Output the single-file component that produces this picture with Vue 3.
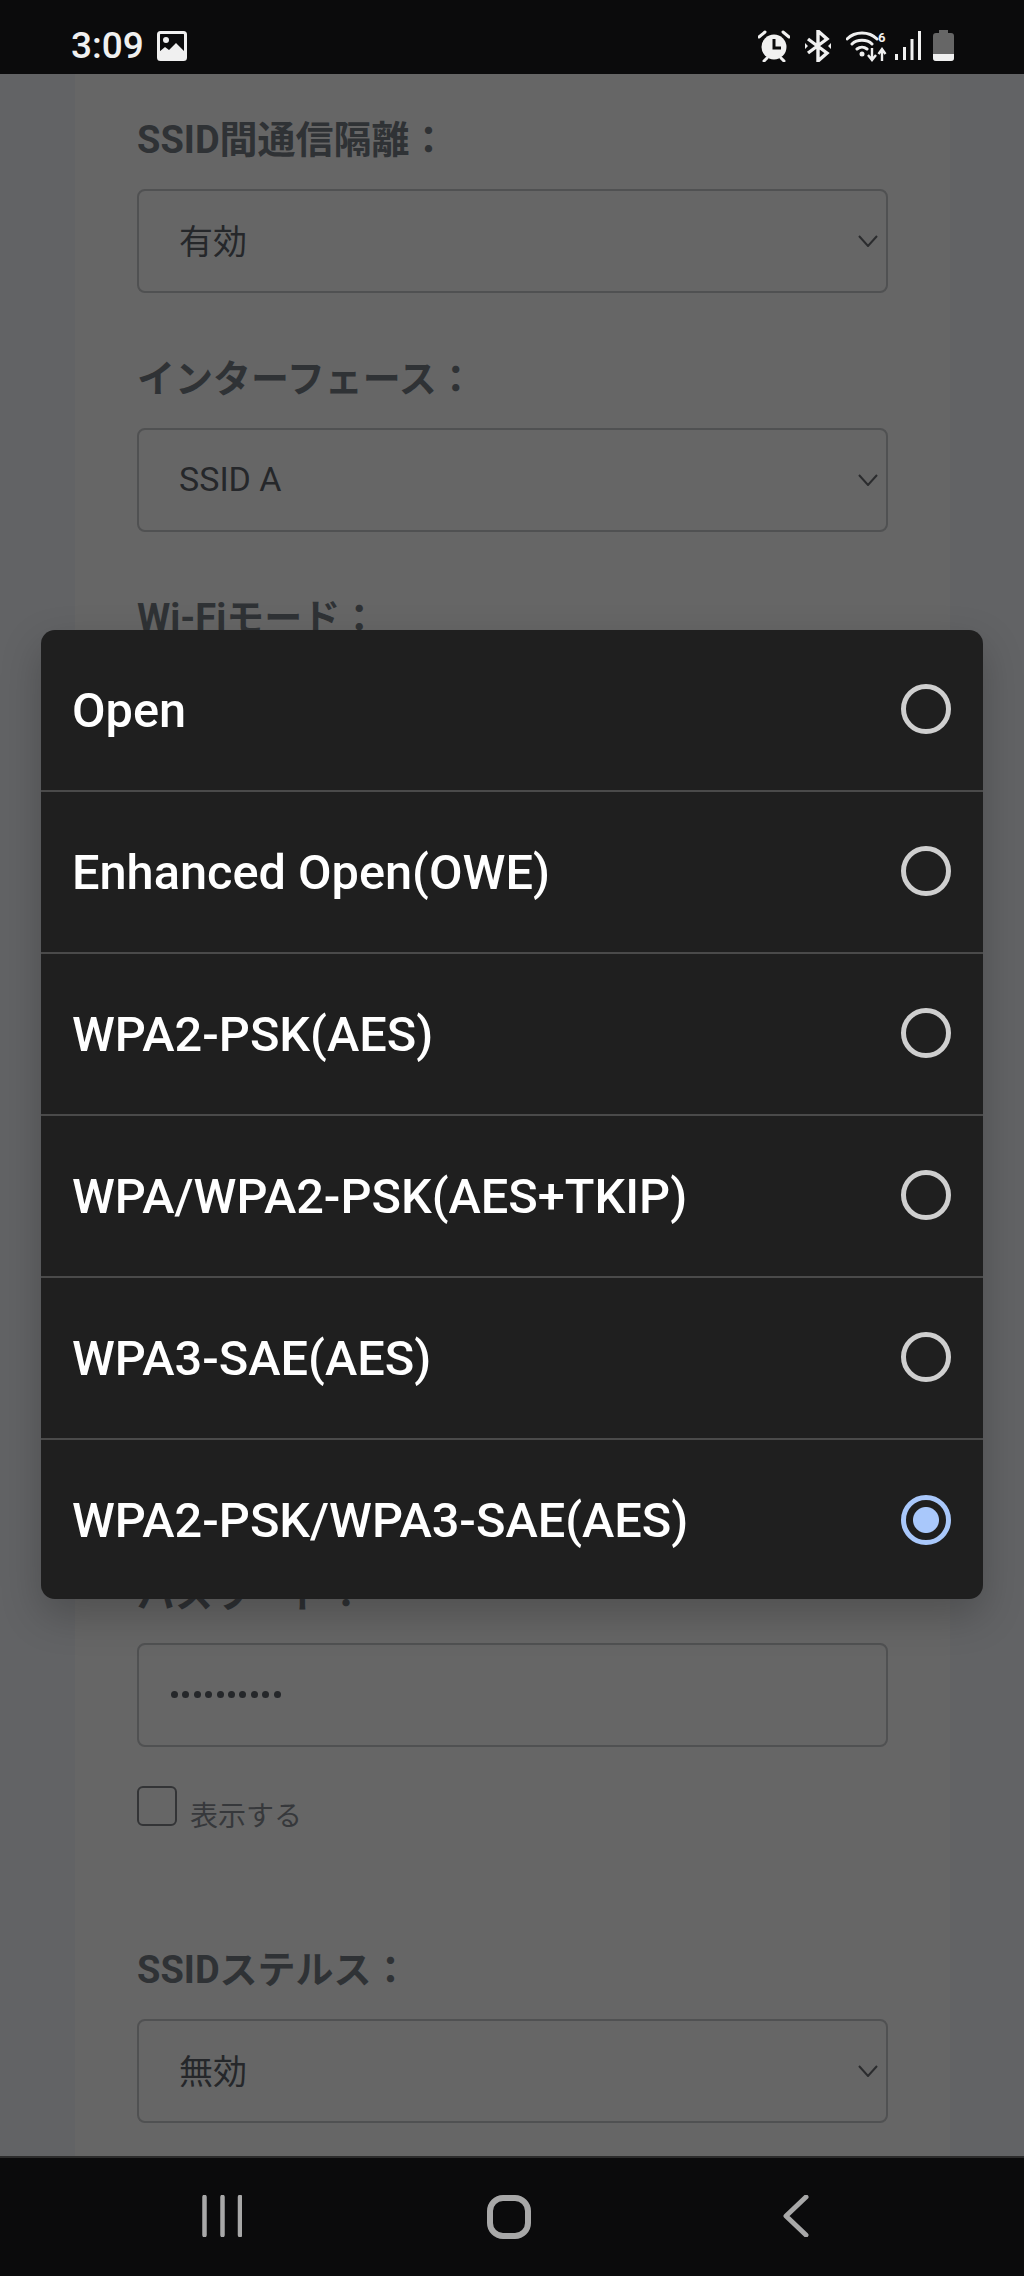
<template>
  <div class="screen">
    <div class="status-bar">
      <div class="status-left">
        <span class="clock">3:09</span>
        <svg class="ic-image" width="30" height="30" viewBox="0 0 30 30">
          <rect x="1.5" y="1.5" width="27" height="27" rx="2" fill="none" stroke="#f0f0f0" stroke-width="3" />
          <circle cx="9" cy="9" r="3" fill="#f0f0f0" />
          <path d="M2 28V21l6-5 4 3 7-7 9 9v7z" fill="#f0f0f0" />
        </svg>
      </div>
      <div class="status-right">
        <svg width="32" height="32" viewBox="0 0 32 32">
          <circle cx="16" cy="17" r="12.5" fill="#f0f0f0" />
          <path d="M16 9v9h7" fill="none" stroke="#0b0b0c" stroke-width="3" />
          <path d="M1 7l6-5M31 7l-6-5M6 31l3-3M26 31l-3-3" fill="none" stroke="#f0f0f0" stroke-width="3" stroke-linecap="round" />
        </svg>
        <svg width="28" height="32" viewBox="0 0 28 32">
          <path d="M4 9l19 14-9 8V1l9 8L4 23" fill="none" stroke="#f0f0f0" stroke-width="3.4" />
          <path d="M1 13l3 3-3 3zM27 13l-3 3 3 3z" fill="#f0f0f0" />
        </svg>
        <svg width="41" height="32" viewBox="0 0 41 32">
          <path d="M1 9c8-8 22-8 30 0M6 14c5-5 15-5 20 0M11 19c3-2.500 7-2.500 10 0" fill="none" stroke="#f0f0f0" stroke-width="3" stroke-linecap="round" />
          <circle cx="16" cy="24" r="2.500" fill="#f0f0f0" />
          <path d="M26 18v11M22 25l4 5 4-5M36 31V20M32.500 24l3.500-5 3.500 5" fill="none" stroke="#f0f0f0" stroke-width="2.400" />
          <text x="32" y="12" class="wifi-six">6</text>
        </svg>
        <svg class="ic-signal" width="26" height="30" viewBox="0 0 26 30">
          <path d="M0 23h3v6H0zM8 16h3v13H8zM15.500 8h3v21h-3zM23 0h3v29h-3z" fill="#f0f0f0" />
        </svg>
        <svg width="21" height="31" viewBox="0 0 21 31">
          <path d="M6 0h9v3h3a3 3 0 0 1 3 3v22a3 3 0 0 1-3 3H3a3 3 0 0 1-3-3V6a3 3 0 0 1 3-3h3z" fill="#666" />
          <path d="M0 24h21v4a3 3 0 0 1-3 3H3a3 3 0 0 1-3-3z" fill="#f0f0f0" />
        </svg>
      </div>
    </div>

    <div class="page">
      <div class="card">
        <div class="field">
          <div class="label">SSID間通信隔離：</div>
          <div class="select">
            <span>有効</span>
            <svg class="chevron" width="20" height="12" viewBox="0 0 20 12"><path d="M1 1l9 10 9-10" /></svg>
          </div>
        </div>
        <div class="field">
          <div class="label">インターフェース：</div>
          <div class="select">
            <span>SSID A</span>
            <svg class="chevron" width="20" height="12" viewBox="0 0 20 12"><path d="M1 1l9 10 9-10" /></svg>
          </div>
        </div>
        <div class="field behind-sheet">
          <div class="label">Wi-Fiモード：</div>
        </div>
        <div class="field">
          <div class="label">パスワード：</div>
          <div class="select password">
            <span class="dots">
              <i v-for="n in 10" :key="n"></i>
            </span>
          </div>
          <div class="show-row">
            <span class="checkbox"></span>
            <span class="show-text">表示する</span>
          </div>
        </div>
        <div class="field stealth">
          <div class="label">SSIDステルス：</div>
          <div class="select">
            <span>無効</span>
            <svg class="chevron" width="20" height="12" viewBox="0 0 20 12"><path d="M1 1l9 10 9-10" /></svg>
          </div>
        </div>
      </div>
    </div>

    <div class="nav-bar">
      <svg width="40" height="42" viewBox="0 0 40 42">
        <path d="M2.500 2v38M20.500 2v38M38 2v38" fill="none" stroke="#a8a8a8" stroke-width="4.500" stroke-linecap="round" />
      </svg>
      <svg width="44" height="44" viewBox="0 0 44 44">
        <rect x="3" y="3" width="38" height="38" rx="13" fill="none" stroke="#a8a8a8" stroke-width="6" />
      </svg>
      <svg class="nav-back" width="26" height="42" viewBox="0 0 26 42">
        <path d="M23 2L3 21l20 19" fill="none" stroke="#a8a8a8" stroke-width="5" stroke-linecap="round" stroke-linejoin="round" />
      </svg>
    </div>

    <div class="sheet">
      <div v-for="opt in options" :key="opt" class="option">
        <span>{{ opt }}</span>
        <span class="radio" :class="{ on: opt === selected }"></span>
      </div>
    </div>
  </div>
</template>

<script setup>
const options = [
  'Open',
  'Enhanced Open(OWE)',
  'WPA2-PSK(AES)',
  'WPA/WPA2-PSK(AES+TKIP)',
  'WPA3-SAE(AES)',
  'WPA2-PSK/WPA3-SAE(AES)'
]
const selected = 'WPA2-PSK/WPA3-SAE(AES)'
</script>

<style>
html, body {
  margin: 0;
  background: #626365;
}
</style>

<style scoped>
.screen {
  position: relative;
  width: 1024px;
  height: 2276px;
  display: flex;
  flex-direction: column;
  overflow: hidden;
  font-family: Roboto, "Noto Sans CJK JP", sans-serif;
}

.status-bar {
  height: 74px;
  flex: none;
  background: #0b0b0c;
  display: flex;
  justify-content: space-between;
  align-items: flex-start;
  padding: 30px 70px 0 71px;
  box-sizing: border-box;
}
.status-left {
  display: flex;
  align-items: center;
  gap: 13px;
}
.clock {
  color: #f0f0f0;
  font-size: 37px;
  font-weight: 500;
  line-height: 32px;
}
.status-right {
  display: flex;
  gap: 14px;
}
.ic-signal {
  margin: 1px -2px 0 -6px;
}
.wifi-six {
  font: 700 13px Roboto, sans-serif;
  fill: #f0f0f0;
}

.page {
  flex: 1;
  background: #626365;
  padding: 0 74px 0 75px;
  overflow: hidden;
}
.card {
  background: #666;
  height: 100%;
  padding: 0 62px;
}

.field {
  padding-top: 43px;
}
.field + .field {
  padding-top: 0;
  margin-top: 63px;
}
.label {
  font-size: 38px;
  font-weight: 700;
  line-height: 46px;
  color: #2f3235;
  margin-bottom: 26px;
}
.behind-sheet {
  height: 913px;
}
.field.stealth {
  margin-top: 121px;
}

.select {
  height: 104px;
  box-sizing: border-box;
  border: 2px solid #505152;
  border-radius: 8px;
  display: flex;
  align-items: center;
  justify-content: space-between;
  padding: 0 8px 3px 40px;
  font-size: 34px;
  color: #25272a;
}
.chevron {
  fill: none;
  stroke: #2b2c2e;
  stroke-width: 2;
  margin-top: 3px;
}
.select.password {
  padding: 0 0 2px 32px;
}
.dots {
  display: flex;
  gap: 4.4px;
}
.dots i {
  width: 7px;
  height: 7px;
  border-radius: 50%;
  background: #25272a;
}

.show-row {
  display: flex;
  align-items: flex-end;
  gap: 13px;
  margin-top: 39px;
}
.checkbox {
  width: 40px;
  height: 40px;
  box-sizing: border-box;
  border: 2.500px solid #333436;
  border-radius: 6px;
}
.show-text {
  font-size: 28px;
  line-height: 40px;
  color: #36383b;
  margin-bottom: -11px;
}

.nav-bar {
  height: 120px;
  flex: none;
  box-sizing: border-box;
  background: #0b0b0c;
  border-top: 2px solid #2c2c2c;
  display: flex;
  padding: 37px 0 0 202px;
  gap: 245px;
  align-items: flex-start;
}
.nav-back {
  margin-left: 7px;
}

.sheet {
  position: absolute;
  left: 41px;
  top: 630px;
  width: 942px;
  background: #1f1f1f;
  border-radius: 14px;
  box-shadow: 0 16px 40px rgba(0, 0, 0, 0.22);
}
.option {
  height: 162px;
  box-sizing: border-box;
  display: flex;
  align-items: center;
  justify-content: space-between;
  padding: 0 32px 0 31px;
  font-size: 48.7px;
  font-weight: 500;
  color: #fff;
  border-bottom: 2px solid #4a4a4a;
}
.option:last-child {
  border-bottom: none;
  height: 159px;
  padding-top: 2px;
}
.radio {
  width: 50px;
  height: 50px;
  box-sizing: border-box;
  border: 5px solid #cfcfcf;
  border-radius: 50%;
  margin-top: -2px;
}
.radio.on {
  border-color: #a9c8fb;
  background: radial-gradient(circle, #a9c8fb 0 12.500px, transparent 13.500px);
}
</style>
